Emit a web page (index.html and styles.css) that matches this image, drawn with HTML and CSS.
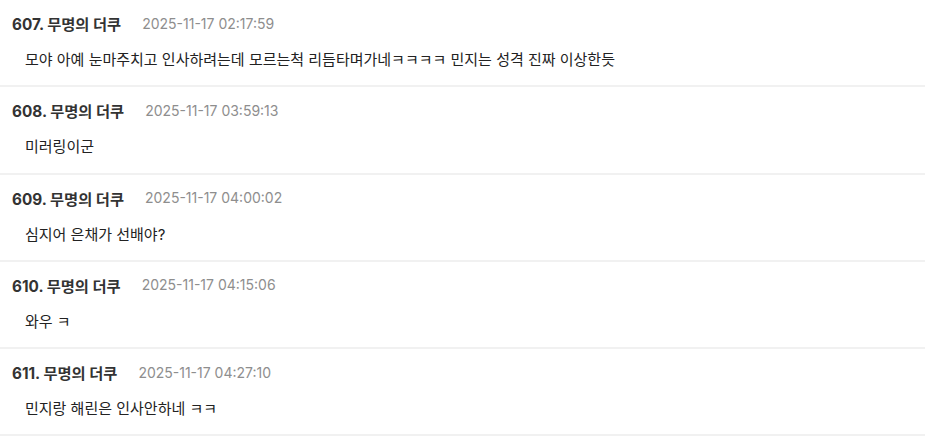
FILE: index.html
```html
<!DOCTYPE html>
<html lang="ko">
<head>
<meta charset="utf-8">
<link rel="stylesheet" href="styles.css">
</head>
<body>
<div class="list">
  <div class="item">
    <div class="head"><span class="name">607. 무명의 더쿠</span><span class="date">2025-11-17 02:17:59</span></div>
    <div class="body">모야 아예 눈마주치고 인사하려는데 모르는척 리듬타며가네ㅋㅋㅋㅋ 민지는 성격 진짜 이상한듯</div>
  </div>
  <div class="item">
    <div class="head"><span class="name">608. 무명의 더쿠</span><span class="date">2025-11-17 03:59:13</span></div>
    <div class="body">미러링이군</div>
  </div>
  <div class="item">
    <div class="head"><span class="name">609. 무명의 더쿠</span><span class="date">2025-11-17 04:00:02</span></div>
    <div class="body">심지어 은채가 선배야?</div>
  </div>
  <div class="item">
    <div class="head"><span class="name">610. 무명의 더쿠</span><span class="date">2025-11-17 04:15:06</span></div>
    <div class="body">와우 ㅋ</div>
  </div>
  <div class="item">
    <div class="head"><span class="name">611. 무명의 더쿠</span><span class="date">2025-11-17 04:27:10</span></div>
    <div class="body">민지랑 해린은 인사안하네 ㅋㅋ</div>
  </div>
</div>
</body>
</html>
```
FILE: styles.css
```css
html, body {
  margin: 0;
  padding: 0;
  background: #ffffff;
}
body {
  font-family: "Inter", "Noto Sans CJK KR", sans-serif;
  color: #333333;
}
.list {
  display: flex;
  flex-direction: column;
}
.item {
  padding: 13px 12px 14px;
  border-bottom: 2px solid #f1f1f1;
  height: 58.25px;
}
.head {
  display: flex;
  align-items: center;
  height: 20px;
  gap: 21px;
}
.name {
  font-size: 15.3px;
  font-weight: 700;
  color: #333333;
}
.date {
  font-size: 14px;
  color: #8e8e8e;
}
.body {
  margin-top: 17px;
  padding-left: 13px;
  font-size: 15px;
  line-height: 20px;
  color: #222222;
}
```
